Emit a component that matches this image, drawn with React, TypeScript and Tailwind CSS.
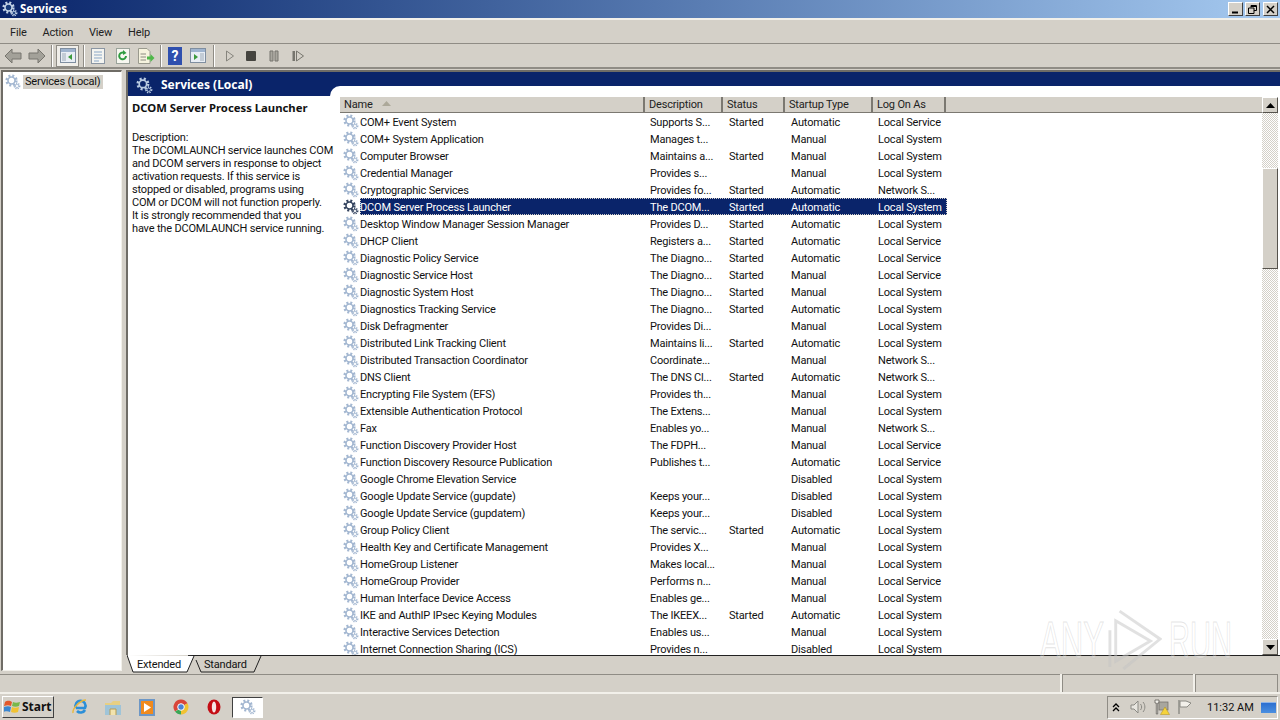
import React from "react";

const FONT = "font-['Roboto','Noto_Sans',sans-serif] tracking-[-0.18px]";
const BOLD = "font-['Noto_Sans',sans-serif] font-bold tracking-normal";

type Row = [string, string, string, string, string];

const rows: Row[] = [
  ["COM+ Event System", "Supports S...", "Started", "Automatic", "Local Service"],
  ["COM+ System Application", "Manages t...", "", "Manual", "Local System"],
  ["Computer Browser", "Maintains a...", "Started", "Manual", "Local System"],
  ["Credential Manager", "Provides s...", "", "Manual", "Local System"],
  ["Cryptographic Services", "Provides fo...", "Started", "Automatic", "Network S..."],
  ["DCOM Server Process Launcher", "The DCOM...", "Started", "Automatic", "Local System"],
  ["Desktop Window Manager Session Manager", "Provides D...", "Started", "Automatic", "Local System"],
  ["DHCP Client", "Registers a...", "Started", "Automatic", "Local Service"],
  ["Diagnostic Policy Service", "The Diagno...", "Started", "Automatic", "Local Service"],
  ["Diagnostic Service Host", "The Diagno...", "Started", "Manual", "Local Service"],
  ["Diagnostic System Host", "The Diagno...", "Started", "Manual", "Local System"],
  ["Diagnostics Tracking Service", "The Diagno...", "Started", "Automatic", "Local System"],
  ["Disk Defragmenter", "Provides Di...", "", "Manual", "Local System"],
  ["Distributed Link Tracking Client", "Maintains li...", "Started", "Automatic", "Local System"],
  ["Distributed Transaction Coordinator", "Coordinate...", "", "Manual", "Network S..."],
  ["DNS Client", "The DNS Cl...", "Started", "Automatic", "Network S..."],
  ["Encrypting File System (EFS)", "Provides th...", "", "Manual", "Local System"],
  ["Extensible Authentication Protocol", "The Extens...", "", "Manual", "Local System"],
  ["Fax", "Enables yo...", "", "Manual", "Network S..."],
  ["Function Discovery Provider Host", "The FDPH...", "", "Manual", "Local Service"],
  ["Function Discovery Resource Publication", "Publishes t...", "", "Automatic", "Local Service"],
  ["Google Chrome Elevation Service", "", "", "Disabled", "Local System"],
  ["Google Update Service (gupdate)", "Keeps your...", "", "Disabled", "Local System"],
  ["Google Update Service (gupdatem)", "Keeps your...", "", "Disabled", "Local System"],
  ["Group Policy Client", "The servic...", "Started", "Automatic", "Local System"],
  ["Health Key and Certificate Management", "Provides X...", "", "Manual", "Local System"],
  ["HomeGroup Listener", "Makes local...", "", "Manual", "Local System"],
  ["HomeGroup Provider", "Performs n...", "", "Manual", "Local Service"],
  ["Human Interface Device Access", "Enables ge...", "", "Manual", "Local System"],
  ["IKE and AuthIP IPsec Keying Modules", "The IKEEX...", "Started", "Automatic", "Local System"],
  ["Interactive Services Detection", "Enables us...", "", "Manual", "Local System"],
  ["Internet Connection Sharing (ICS)", "Provides n...", "", "Disabled", "Local System"],
];

const descLines = [
  "The DCOMLAUNCH service launches COM",
  "and DCOM servers in response to object",
  "activation requests. If this service is",
  "stopped or disabled, programs using",
  "COM or DCOM will not function properly.",
  "It is strongly recommended that you",
  "have the DCOMLAUNCH service running.",
];

const Gear = ({ size = 16, color = "#a3b7d1", hub = "#ffffff", className = "" }: { size?: number; color?: string; hub?: string; className?: string }) => (
  <svg width={size} height={size} viewBox="0 0 16 16" className={className}>
    <circle cx="6.5" cy="6.5" r="4.8" fill="none" stroke={color} strokeWidth="2.6" strokeDasharray="1.9 1.9" />
    <circle cx="6.5" cy="6.5" r="3.5" fill={hub} stroke={color} strokeWidth="1.6" />
    <circle cx="12" cy="12" r="2.6" fill="none" stroke={color} strokeWidth="1.6" strokeDasharray="1.2 1" />
    <circle cx="12" cy="12" r="1.6" fill={hub} stroke={color} strokeWidth="0.8" />
  </svg>
);

const ColHead = ({ label, w, sort }: { label: string; w: string; sort?: boolean }) => (
  <div className={`${w} h-full shrink-0 flex items-center pl-[4px] border-r-2 border-r-[#7b7871]`}>
    <span>{label}</span>
    {sort && (
      <svg width="9" height="5" viewBox="0 0 9 5" className="ml-[9px] mb-[2px]">
        <path d="M0 5 L4.5 0 L9 5 Z" fill="#aca899" />
      </svg>
    )}
  </div>
);

const ScrollBtn = ({ up }: { up?: boolean }) => (
  <div className="h-[16px] w-[16px] shrink-0 bg-[#d4d0c8] border border-t-white border-l-white border-r-[#55524c] border-b-[#55524c] flex items-center justify-center">
    <svg width="9" height="5" viewBox="0 0 9 5">
      <path d={up ? "M0 5 L4.5 0 L9 5 Z" : "M0 0 L4.5 5 L9 0 Z"} fill="#000" />
    </svg>
  </div>
);

const TbSep = ({ className = "" }: { className?: string }) => (
  <div className={`w-[2px] h-[22px] bg-[#8f8c85] border-r border-white ${className}`} />
);

const Toolbar = () => (
  <div className="h-[25px] shrink-0 flex items-center pl-[4px] border-b-2 border-[#8f8c85]">
    <svg width="42" height="20" viewBox="0 0 42 20">
      <path d="M1 10 L8 3 V7 H17 V13 H8 V17 Z" fill="#a3a199" stroke="#77756e" />
      <path d="M41 10 L34 3 V7 H25 V13 H34 V17 Z" fill="#a3a199" stroke="#77756e" />
    </svg>
    <TbSep className="ml-[5px]" />
    <div className="ml-[3px] w-[23px] h-[22px] border border-[#8f8c85] bg-[#f0eee9] flex items-center justify-center">
      <svg width="16" height="15" viewBox="0 0 16 15">
        <rect x="0.5" y="0.5" width="15" height="14" fill="#e9eef5" stroke="#7f8ea0" />
        <rect x="1" y="1" width="14" height="3" fill="#9fb4cf" />
        <rect x="2" y="5" width="4" height="8" fill="#c3ccd6" />
        <path d="M12 6 L8 9 L12 12 Z" fill="#3c9a3c" />
      </svg>
    </div>
    <TbSep className="ml-[4px]" />
    <svg width="16" height="16" viewBox="0 0 16 16" className="ml-[5px]">
      <rect x="1.5" y="0.5" width="13" height="15" fill="#f4f4f0" stroke="#8b96a3" />
      <path d="M4 4 H12 M4 7 H12 M4 10 H12 M4 13 H9" stroke="#8aa7c7" />
    </svg>
    <svg width="16" height="16" viewBox="0 0 16 16" className="ml-[9px]">
      <rect x="1.5" y="0.5" width="13" height="15" fill="#f7f7f0" stroke="#9aa39a" />
      <path d="M11 8 A3.4 3.4 0 1 1 9 4.8" fill="none" stroke="#2e9c3f" strokeWidth="2" />
      <path d="M8 2 L11.5 5 L8 7 Z" fill="#2e9c3f" />
    </svg>
    <svg width="18" height="16" viewBox="0 0 18 16" className="ml-[6px]">
      <path d="M1.5 .5 H10 L13 3.5 V15.5 H1.5 Z" fill="#f6f3df" stroke="#9a9a8e" />
      <path d="M3.5 6 H9 M3.5 9 H9 M3.5 12 H9" stroke="#8a8a80" />
      <path d="M10 8.5 H13.5 V6 L17.5 10 L13.5 14 V11.5 H10 Z" fill="#4fb84a" />
    </svg>
    <TbSep className="ml-[5px]" />
    <div className="ml-[6px] w-[14px] h-[18px] bg-[#2f4fae] text-white text-[14px] font-bold leading-[18px] text-center">?</div>
    <svg width="16" height="15" viewBox="0 0 16 15" className="ml-[8px]">
      <rect x="0.5" y="0.5" width="15" height="14" fill="#e9eef5" stroke="#7f8ea0" />
      <rect x="1" y="1" width="14" height="3" fill="#9fb4cf" />
      <rect x="10" y="5" width="4" height="8" fill="#c3ccd6" />
      <path d="M4 6 L8 9 L4 12 Z" fill="#3c9a3c" />
    </svg>
    <TbSep className="ml-[7px]" />
    <svg width="10" height="12" viewBox="0 0 10 12" className="ml-[10px]"><path d="M1.5 1 L8.5 6 L1.5 11 Z" fill="#d4d0c8" stroke="#86847d" /></svg>
    <div className="ml-[11px] w-[10px] h-[10px] bg-[#45443f] rounded-[1px]" />
    <svg width="10" height="12" viewBox="0 0 10 12" className="ml-[13px]"><path d="M1 1 H4 V11 H1 Z M6 1 H9 V11 H6 Z" fill="#a8a69e" stroke="#77756e" /></svg>
    <svg width="12" height="12" viewBox="0 0 12 12" className="ml-[13px]"><path d="M.5 1 H3 V11 H.5 Z" fill="#77756e" /><path d="M4.5 1 L11.5 6 L4.5 11 Z" fill="#d4d0c8" stroke="#77756e" /></svg>
  </div>
);

const ServiceRow = ({ row }: { row: Row }) => {
  const selected = row[0] === "DCOM Server Process Launcher";
  return (
    <div className="h-[17px] flex items-center w-[607px]">
      <div className="w-[20px] shrink-0 pl-[3px] flex items-center">
        <Gear size={16} color={selected ? "#34445f" : "#a3b7d1"} />
      </div>
      <div className={`flex h-full items-center flex-1 pt-[2px] ${selected ? "bg-[#0a246a] text-white outline-1 outline-dotted outline-offset-[-1px] outline-[#d4d0c8]" : "text-[#111]"}`}>
        <div className="w-[285px] shrink-0 whitespace-nowrap">{row[0]}</div>
        <div className="w-[78px] shrink-0 pl-[5px] whitespace-nowrap">{row[1]}</div>
        <div className="w-[62px] shrink-0 pl-[6px] whitespace-nowrap">{row[2]}</div>
        <div className="w-[88px] shrink-0 pl-[6px] whitespace-nowrap">{row[3]}</div>
        <div className="pl-[5px] whitespace-nowrap">{row[4]}</div>
      </div>
    </div>
  );
};

const TabShape = ({ points, fill }: { points: string; fill: string }) => (
  <svg width="70" height="18" viewBox="0 0 70 18" className="absolute left-0 top-0">
    <polyline points={points} fill={fill} stroke="#222" strokeWidth="1" />
  </svg>
);

const TaskIcons = () => (
  <div className="flex items-center ml-[17px]">
    <svg width="18" height="18" viewBox="0 0 18 18" className="mr-[15px]">
      <path d="M5 10 A5 5 0 1 1 14 10 H5 M14 12 A5 5 0 0 1 6 13" fill="none" stroke="#2c8fd8" strokeWidth="2.6" />
      <path d="M2 15 C1 11 9 2 15 2" fill="none" stroke="#e9b83c" strokeWidth="1.5" />
    </svg>
    <svg width="18" height="17" viewBox="0 0 18 17" className="mr-[17px]">
      <path d="M1 4 H7 L9 2 H16 V6 H1 Z" fill="#e8cf82" />
      <path d="M1 6 H17 V16 H1 Z" fill="#9fc4d8" />
      <path d="M6 16 V10 H12 V16" fill="#f2e3ae" stroke="#b79c52" />
    </svg>
    <div className="w-[16px] h-[17px] mr-[18px] bg-[#f08a1d] border-2 border-[#6d97c6] flex items-center justify-center">
      <svg width="8" height="9" viewBox="0 0 8 9"><path d="M1 0 L8 4.5 L1 9 Z" fill="#fff" /></svg>
    </div>
    <svg width="16" height="16" viewBox="0 0 16 16" className="mr-[17px]">
      <path d="M8 8 L8 .5 A7.5 7.5 0 0 1 14.5 4.3 Z" fill="#d9453a" />
      <path d="M8 .5 A7.5 7.5 0 0 0 2 12.5 L8 8 Z" fill="#d9453a" />
      <path d="M2 12.5 A7.5 7.5 0 0 0 8 15.5 L11 8 Z" fill="#3aa655" />
      <path d="M14.5 4.3 A7.5 7.5 0 0 1 8 15.5 L8 8 Z" fill="#f1c232" />
      <circle cx="8" cy="8" r="3.3" fill="#4c83d6" stroke="#fff" />
    </svg>
    <svg width="16" height="18" viewBox="0 0 16 18" className="mr-[10px]">
      <ellipse cx="8" cy="9" rx="6.5" ry="7.5" fill="#c40d15" />
      <ellipse cx="8" cy="9" rx="2.2" ry="5.5" fill="#f6e6e6" />
    </svg>
  </div>
);

export default function App() {
  return (
    <div className={`${FONT} w-[1280px] h-[720px] overflow-hidden bg-[#d4d0c8] text-[11px] leading-none text-[#111] flex flex-col relative`}>
      {/* title bar */}
      <div className="h-[18px] shrink-0 bg-gradient-to-r from-[#0a246a] to-[#a6caf0] flex items-center pl-[2px]">
        <Gear size={16} color="#c3d3e6" hub="#163a7a" />
        <span className={`${BOLD} ml-[2px] text-white text-[11.5px]`}>Services</span>
        <div className="ml-auto flex gap-[2px] pr-[2px]">
          {["min", "max", "close"].map((k) => (
            <div key={k} className={`w-[15px] h-[14px] bg-[#d4d0c8] border border-t-white border-l-white border-r-[#404040] border-b-[#404040] ${k === "close" ? "ml-[1px]" : ""} flex items-center justify-center`}>
              <svg width="9" height="9" viewBox="0 0 9 9">
                {k === "min" && <path d="M1 7.5 H7" stroke="#000" strokeWidth="2" />}
                {k === "max" && <path d="M3 2.5 V.5 H8.5 V5.5 H6 M.5 3 H6 V8.5 H.5 Z M3 1.5 H8" fill="none" stroke="#000" />}
                {k === "close" && <path d="M1 1 L8 8 M8 1 L1 8" stroke="#000" strokeWidth="1.5" />}
              </svg>
            </div>
          ))}
        </div>
      </div>
      <div className="h-[2px] shrink-0 bg-[#f2f0ea]" />

      {/* menu */}
      <div className="h-[24px] shrink-0 flex items-center pl-[10px] pt-[2px] gap-[16px] border-b border-[#8f8c85] text-[#222]">
        <span>File</span>
        <span>Action</span>
        <span>View</span>
        <span>Help</span>
      </div>

      <Toolbar />

      {/* main */}
      <div className="h-[604px] shrink-0 flex pt-px">
        <div className="w-[121px] ml-[1px] shrink-0 bg-white border-l-2 border-t-2 border-[#6f6c66] border-r border-r-[#f2f0ea] border-b border-b-[#f2f0ea] pl-[2px] pt-[1px] mb-[2px]">
          <div className="flex items-center h-[17px]">
            <Gear size={16} />
            <span className="ml-[2px] bg-[#d4d0c8] h-[14px] px-[2px] flex items-center">Services (Local)</span>
          </div>
        </div>
        <div className="w-[4px] shrink-0" />
        <div className="flex-1 flex flex-col min-w-0">
          <div className="flex-1 min-h-0 flex flex-col border-l-2 border-t-2 border-[#6f6c66]">
            {/* navy strip */}
            <div className="h-[24px] shrink-0 bg-[#0a246a] flex">
              <div className="w-[202px] shrink-0 flex items-center pl-[8px] pt-[2px]">
                <Gear size={17} color="#b9cbe2" hub="#0a246a" />
                <span className={`${BOLD} ml-[8px] text-white text-[12px]`}>Services (Local)</span>
              </div>
              <div className="flex-1 mt-[14px] bg-white rounded-tl-[10px]" />
            </div>
            <div className="flex-1 min-h-0 flex bg-white">
              {/* description */}
              <div className="w-[212px] shrink-0 pl-[4px] pt-[6px]">
                <div className={`${BOLD} h-[14px] text-[11.3px] text-[#111]`}>DCOM Server Process Launcher</div>
                <div className="mt-[16px] h-[13px]">Description:</div>
                {descLines.map((l) => (
                  <div key={l} className="h-[13px] whitespace-nowrap">{l}</div>
                ))}
              </div>
              {/* list */}
              <div className="flex-1 min-w-0 flex flex-col pt-px overflow-hidden">
                <div className="h-[16px] shrink-0 flex bg-[#d4d0c8] border-b border-[#7b7871] text-[#222]">
                  <ColHead label="Name" w="w-[305px]" sort />
                  <ColHead label="Description" w="w-[78px]" />
                  <ColHead label="Status" w="w-[62px]" />
                  <ColHead label="Startup Type" w="w-[88px]" />
                  <ColHead label="Log On As" w="w-[73px]" />
                </div>
                <div className="flex-1 min-h-0 overflow-hidden">
                  {rows.map((r) => (
                    <ServiceRow key={r[0]} row={r} />
                  ))}
                </div>
              </div>
              {/* scrollbar */}
              <div className="w-[16px] shrink-0 flex flex-col bg-[repeating-conic-gradient(#d4d0c8_0_25%,#ffffff_0_50%)] bg-[length:2px_2px] mt-px mr-[2px]">
                <ScrollBtn up />
                <div className="h-[55px] shrink-0" />
                <div className="h-[101px] shrink-0 bg-[#d4d0c8] border border-t-white border-l-white border-r-[#55524c] border-b-[#55524c]" />
                <div className="flex-1" />
                <ScrollBtn />
              </div>
            </div>
          </div>

          {/* tabs */}
          <div className="h-[18px] shrink-0 flex pl-px relative">
            <div className="absolute top-0 left-[62px] right-0 h-px bg-[#222]" />
            <div className="relative w-[68px] h-[18px] flex items-center">
              <TabShape points="0,0 6,17 60,17 67,1" fill="#ffffff" />
              <span className="relative ml-[10px]">Extended</span>
            </div>
            <div className="relative w-[68px] h-[18px] flex items-center -ml-[1px]">
              <TabShape points="2,5 7,17 60,17 67,1" fill="#d4d0c8" />
              <span className="relative ml-[10px]">Standard</span>
            </div>
          </div>
        </div>
      </div>

      {/* status bar */}
      <div className="h-[19px] shrink-0 flex pt-px">
        <div className="w-[1060px] border-t border-[#8f8c85]" />
        <div className="w-[2px] bg-[#f2f0ea]" />
        <div className="w-[131px] border-t border-l border-[#8f8c85]" />
        <div className="w-[2px] bg-[#f2f0ea]" />
        <div className="w-[83px] border-t border-l border-r border-[#8f8c85]" />
      </div>
      <div className="h-[2px] shrink-0 bg-[#f2f0ea]" />

      {/* taskbar */}
      <div className="h-[26px] shrink-0 flex items-center">
        <div className="w-[52px] h-[22px] ml-[2px] shrink-0 bg-[#d4d0c8] border border-t-white border-l-white border-r-[#404040] border-b-[#404040] flex items-center pl-px">
          <svg width="17" height="16" viewBox="0 0 17 16">
            <path d="M1 3 C4 1 6 2 8 3 L7 7 C5 6 3 6 0 7 Z" fill="#e2582b" />
            <path d="M9 3 C11 4 13 4 16 3 L15 7 C13 8 10 8 8 7 Z" fill="#78b84a" />
            <path d="M0 8 C3 7 5 7 7 8 L6 13 C4 12 2 12 -1 13 Z" fill="#3a86d0" />
            <path d="M8 8 C10 9 12 9 15 8 L14 13 C12 14 9 14 7 13 Z" fill="#f1c232" />
          </svg>
          <span className={`${BOLD} text-[12px] ml-px`}>Start</span>
        </div>
        <TaskIcons />
        <div className="w-[31px] h-[21px] bg-white border border-t-[#404040] border-l-[#404040] border-r-white border-b-white flex items-center justify-center">
          <Gear size={16} />
        </div>
        <div className="ml-auto h-[23px] w-[171px] mr-[2px] border border-t-[#8f8c85] border-l-[#8f8c85] border-r-white border-b-white flex items-center pl-[4px]">
          <svg width="8" height="9" viewBox="0 0 8 9" className="mr-[10px]">
            <path d="M1 4 L4 1 L7 4 M1 8 L4 5 L7 8" fill="none" stroke="#000" strokeWidth="1.3" />
          </svg>
          <svg width="16" height="14" viewBox="0 0 16 14" className="mr-[8px]">
            <path d="M1 5 H4 L8 1 V13 L4 9 H1 Z" fill="#e8e6e0" stroke="#8b8a84" />
            <path d="M10.5 4 C12 6 12 8 10.5 10 M13 2 C15.5 5 15.5 9 13 12" fill="none" stroke="#8b8a84" />
          </svg>
          <svg width="16" height="16" viewBox="0 0 16 16" className="mr-[7px]">
            <path d="M1 1 H5 V4 H3.7 V15 H2.3 V4 H1 Z" fill="#f2f0ea" stroke="#55524c" strokeWidth=".7" />
            <rect x="5" y="3" width="9" height="8" fill="#a8a69e" stroke="#6f6c66" strokeWidth=".7" />
            <path d="M11 8 L15.5 15.5 H6.5 Z" fill="#f5d33b" stroke="#b08f15" strokeWidth=".5" />
          </svg>
          <svg width="16" height="16" viewBox="0 0 16 16" className="mr-[14px]">
            <path d="M2 1 V15" stroke="#8b8a84" strokeWidth="1.4" />
            <path d="M3 2 H9 L14 4 L10 8 H3 Z" fill="#f2f0ea" stroke="#8b8a84" />
          </svg>
          <span className="text-[#111] whitespace-nowrap w-[47px] tracking-normal">11:32 AM</span>
          <div className="w-[15px] h-[11px] ml-[7px] bg-gradient-to-b from-[#2c6fd0] to-[#4b8fe0] border-t border-[#8fb4e8]" />
        </div>
      </div>

      {/* watermark */}
      <div className="absolute left-[1040px] top-[608px] w-[194px] h-[64px] flex items-center pointer-events-none">
        <span className="block w-[68px] shrink-0 text-[52px] leading-none tracking-normal text-white/25 [-webkit-text-stroke:1px_rgba(195,195,195,0.45)] font-['Liberation_Sans',sans-serif] scale-x-[0.6] origin-left">ANY</span>
        <svg width="54" height="64" viewBox="0 0 56 64" className="shrink-0">
          <path d="M8 12 V54 L44 33 Z M2 22 V60 M12 2 L54 31 L16 62" fill="none" stroke="rgba(195,195,195,0.5)" strokeWidth="3" />
        </svg>
        <span className="block ml-[7px] w-[62px] shrink-0 text-[52px] leading-none tracking-normal text-white/25 [-webkit-text-stroke:1px_rgba(195,195,195,0.45)] font-['Liberation_Sans',sans-serif] scale-x-[0.56] origin-left">RUN</span>
      </div>
    </div>
  );
}
